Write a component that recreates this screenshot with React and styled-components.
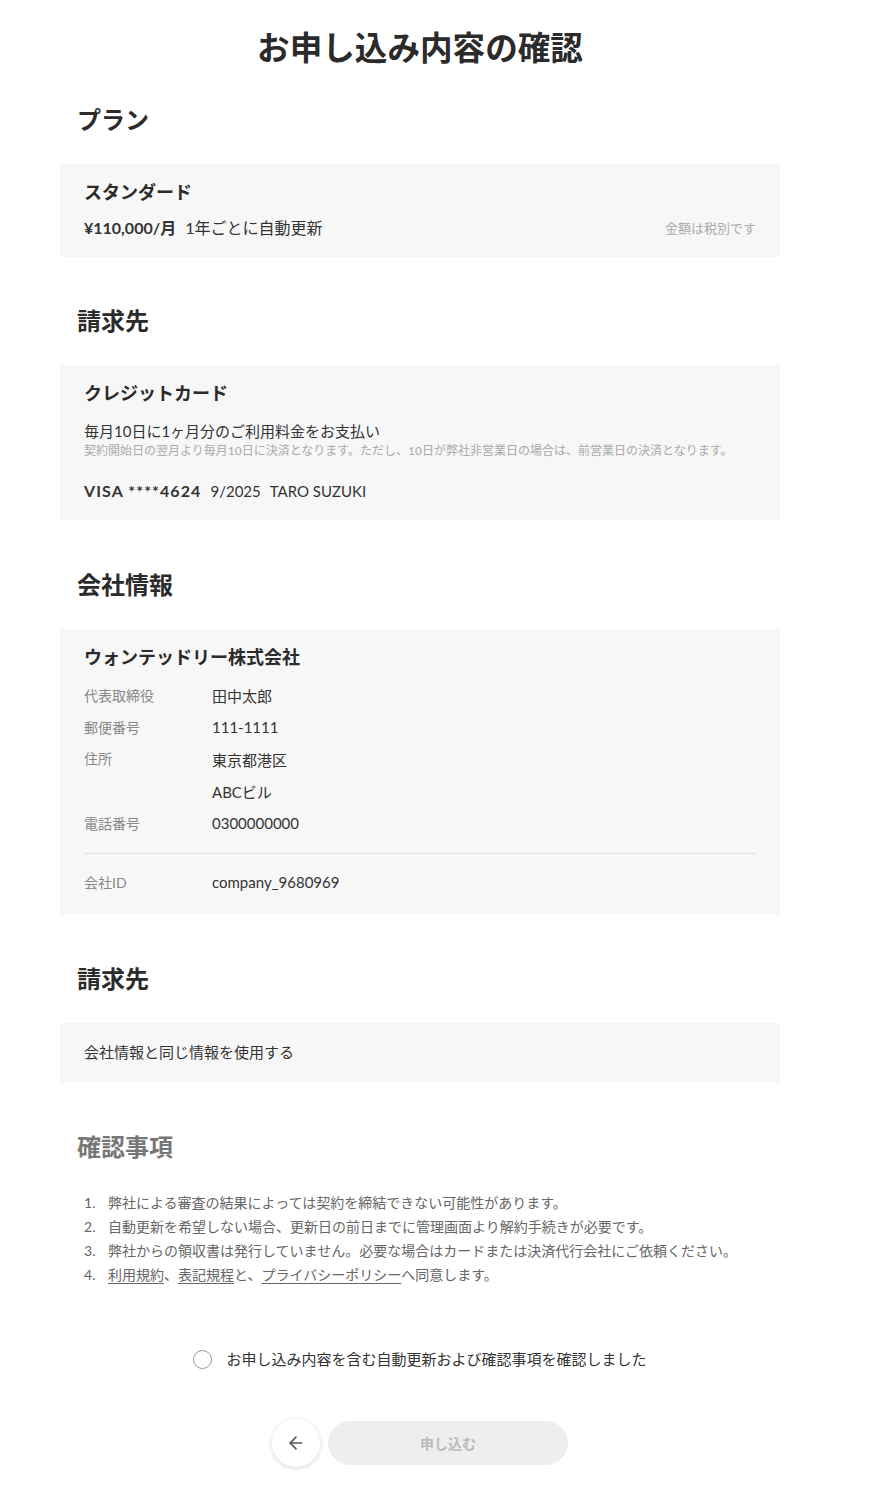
import React from "react";
import styled, { createGlobalStyle } from "styled-components";
import { ArrowLeft } from "lucide-react";

const Global = createGlobalStyle`
  html, body { margin: 0; padding: 0; background: #fff; }
  body {
    font-family: Lato, "Noto Sans CJK JP", sans-serif;
    color: #333;
    -webkit-font-smoothing: antialiased;
  }
`;

const Page = styled.main`
  width: 720px;
  margin-left: 60px;
  padding: 28px 0 20px;
`;

const Title = styled.h1`
  margin: 0;
  text-align: center;
  font-size: 32.6px;
  line-height: 40px;
  font-weight: 700;
  color: #2b2b2b;
`;

const Section = styled.section`
  margin-top: ${(p) => p.$top}px;
`;

const Heading = styled.h2`
  margin: 0 0 28px;
  padding-left: 17px;
  font-size: 24px;
  line-height: 32px;
  font-weight: 700;
  color: ${(p) => (p.$muted ? "#777" : "#2b2b2b")};
`;

const Card = styled.div`
  background: #f7f7f7;
  padding: ${(p) => p.$pad || "14px 24px 16px"};
`;

const CardName = styled.div`
  font-size: 18px;
  line-height: 28px;
  font-weight: 700;
  color: #2b2b2b;
`;

const PlanRow = styled.div`
  display: flex;
  align-items: center;
  margin-top: 10px;
  font-size: 16px;
  line-height: 24px;
`;

const Price = styled.span`
  font-weight: 700;
  margin-right: 9px;
`;

const TaxNote = styled.span`
  margin-left: auto;
  font-size: 13px;
  color: #aaa;
`;

const Text = styled.div`
  font-size: 15px;
  line-height: ${(p) => p.$lh || 22}px;
  margin-top: ${(p) => p.$top || 0}px;
`;

const Note = styled.div`
  font-size: 12px;
  line-height: 18px;
  color: #aaa;
`;

const CardLine = styled.div`
  margin-top: 19px;
  font-size: 15px;
  line-height: 24px;
  display: flex;
  gap: 9px;
  align-items: baseline;
`;

const CardNum = styled.span`
  font-size: 16px;
  font-weight: 700;
  letter-spacing: 1.1px;
`;

const InfoList = styled.dl`
  margin: ${(p) => (p.$flush ? "0" : "8px 0 0")};
  display: grid;
  grid-template-columns: 128px 1fr;
  grid-auto-rows: 32px;
  align-items: center;
`;

const Label = styled.dt`
  font-size: 14px;
  color: #888;
  align-self: ${(p) => (p.$top ? "start" : "center")};
  padding-top: ${(p) => (p.$top ? "5px" : "0")};
`;

const Value = styled.dd`
  margin: 0;
  font-size: 15px;
  color: #333;
  grid-column: 2;
`;

const Divider = styled.hr`
  margin: 14px 0 12px;
  border: none;
  border-top: 1px solid #e2e2e2;
`;

const List = styled.ol`
  margin: 0;
  padding: 0 0 0 24px;
  list-style: none;
  counter-reset: item;
`;

const Item = styled.li`
  position: relative;
  padding-left: 24px;
  font-size: 14px;
  line-height: 24px;
  color: #666;
  counter-increment: item;
  &::before {
    content: counter(item) ".";
    position: absolute;
    left: 0;
  }
`;

const Link = styled.a`
  color: #666;
  text-decoration: underline;
  text-underline-offset: 3px;
`;

const CheckRow = styled.label`
  margin-top: 60px;
  display: flex;
  justify-content: center;
  align-items: center;
  gap: 14px;
  font-size: 15px;
  line-height: 24px;
  color: #333;
`;

const Circle = styled.span`
  width: 17px;
  height: 17px;
  border: 1.6px solid #999;
  border-radius: 50%;
  flex: none;
`;

const Actions = styled.div`
  margin-top: 48px;
  display: flex;
  justify-content: center;
  align-items: center;
  gap: 8px;
`;

const BackButton = styled.button`
  width: 48px;
  height: 48px;
  border-radius: 50%;
  border: none;
  background: #fff;
  box-shadow: 0 1px 5px rgba(0, 0, 0, 0.16);
  display: flex;
  align-items: center;
  justify-content: center;
  color: #555;
  padding: 0;
`;

const SubmitButton = styled.button`
  width: 240px;
  height: 44px;
  border-radius: 22px;
  border: none;
  background: #eee;
  color: #bbb;
  font-family: inherit;
  font-size: 14px;
  font-weight: 700;
`;

export default function App() {
  return (
    <>
      <Global />
      <Page>
        <Title>お申し込み内容の確認</Title>

        <Section $top={36}>
          <Heading>プラン</Heading>
          <Card $pad="14px 24px 17px">
            <CardName>スタンダード</CardName>
            <PlanRow>
              <Price>¥110,000/月</Price>
              <span>1年ごとに自動更新</span>
              <TaxNote>金額は税別です</TaxNote>
            </PlanRow>
          </Card>
        </Section>

        <Section $top={48}>
          <Heading>請求先</Heading>
          <Card $pad="14px 24px 17px">
            <CardName>クレジットカード</CardName>
            <Text $top={13}>毎月10日に1ヶ月分のご利用料金をお支払い</Text>
            <Note>
              契約開始日の翌月より毎月10日に決済となります。ただし、10日が弊社非営業日の場合は、前営業日の決済となります。
            </Note>
            <CardLine>
              <CardNum>VISA ****4624</CardNum>
              <span>9/2025</span>
              <span>TARO SUZUKI</span>
            </CardLine>
          </Card>
        </Section>

        <Section $top={49}>
          <Heading>会社情報</Heading>
          <Card $pad="14px 24px 16px">
            <CardName>ウォンテッドリー株式会社</CardName>
            <InfoList>
              <Label>代表取締役</Label>
              <Value>田中太郎</Value>
              <Label>郵便番号</Label>
              <Value>111-1111</Value>
              <Label $top>住所</Label>
              <Value>東京都港区</Value>
              <Value>ABCビル</Value>
              <Label>電話番号</Label>
              <Value>0300000000</Value>
            </InfoList>
            <Divider />
            <InfoList $flush>
              <Label>会社ID</Label>
              <Value>company_9680969</Value>
            </InfoList>
          </Card>
        </Section>

        <Section $top={49}>
          <Heading>請求先</Heading>
          <Card $pad="18px 24px 18px">
            <Text $lh={23}>会社情報と同じ情報を使用する</Text>
          </Card>
        </Section>

        <Section $top={49}>
          <Heading $muted>確認事項</Heading>
          <List>
            <Item>弊社による審査の結果によっては契約を締結できない可能性があります。</Item>
            <Item>自動更新を希望しない場合、更新日の前日までに管理画面より解約手続きが必要です。</Item>
            <Item>弊社からの領収書は発行していません。必要な場合はカードまたは決済代行会社にご依頼ください。</Item>
            <Item>
              <Link>利用規約</Link>、<Link>表記規程</Link>と、<Link>プライバシーポリシー</Link>へ同意します。
            </Item>
          </List>
        </Section>

        <CheckRow>
          <Circle />
          <span>お申し込み内容を含む自動更新および確認事項を確認しました</span>
        </CheckRow>

        <Actions>
          <BackButton aria-label="戻る">
            <ArrowLeft size={20} strokeWidth={2} />
          </BackButton>
          <SubmitButton disabled>申し込む</SubmitButton>
        </Actions>
      </Page>
    </>
  );
}
